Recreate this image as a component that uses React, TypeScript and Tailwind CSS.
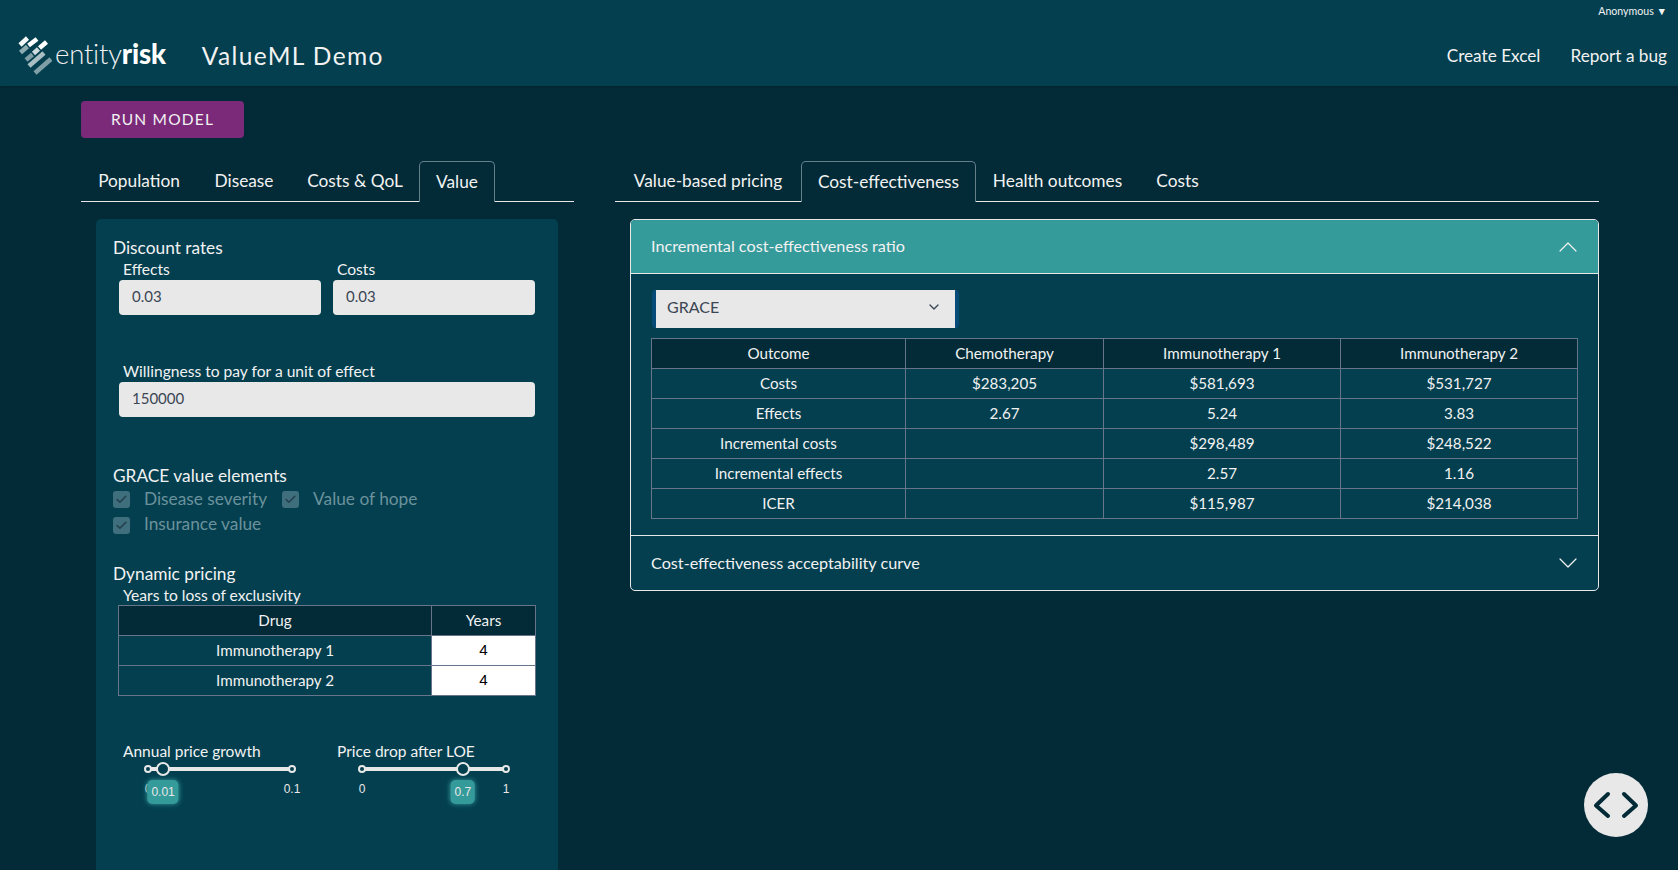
import React from 'react';
import { ChevronDown, ChevronUp, Check } from 'lucide-react';

const Logo = () => (
  <svg width="34" height="40" viewBox="0 0 34 40" fill="none" strokeWidth="4.6" className="shrink-0">
    <path d="M2 9L9.5 2" stroke="#f4f7f7" />
    <path d="M2.5 16.5L9.5 10.5" stroke="#8fabb2" />
    <path d="M10.5 9.5L19 3" stroke="#ffffff" />
    <path d="M8 24L14.5 18.5" stroke="#7f9ea6" />
    <path d="M15.5 17.5L20.5 13" stroke="#cfdcdf" />
    <path d="M21.5 12L28.5 6" stroke="#ffffff" />
    <path d="M11 30L26 17" stroke="#a9bfc4" />
    <path d="M17 37L33 23" stroke="#7f9ea6" />
  </svg>
);

type Tab = { label: string; width: string };

const TabBar = ({ tabs, active }: { tabs: Tab[]; active: string }) => (
  <div className="flex h-[41px] items-stretch">
    {tabs.map((t) => (
      <div
        key={t.label}
        className={
          (t.label === active
            ? 'flex items-center justify-center rounded-t-[5px] border border-b-0 border-[#66808c] '
            : 'flex items-center justify-center border-b border-[#e8e8e8] ') + t.width
        }
      >
        {t.label}
      </div>
    ))}
    <div className="flex-1 border-b border-[#e8e8e8]" />
  </div>
);

const TextInput = ({ value }: { value: string }) => (
  <div className="flex h-[35px] items-center rounded-[4px] bg-[#e8e8e8] pb-[2px] pl-[13px] text-[15px] text-[#3b4654]">{value}</div>
);

const CheckItem = ({ label }: { label: string }) => (
  <div className="flex items-center">
    <span className="flex h-[17px] w-[17px] items-center justify-center rounded-[3px] bg-[#3f6f7c]">
      <Check size={13} strokeWidth={3} className="text-[#243f4c]" />
    </span>
    <span className="ml-[14px] -translate-y-px text-[#6b929c]">{label}</span>
  </div>
);

const Slider = ({ pos, value, marks }: { pos: number; value: string; marks: [number, string][] }) => (
  <div className="relative ml-[25px] h-[44px] w-[144px]">
    <div className="absolute left-0 right-0 top-[3px] h-[4px] bg-[#e8e8e8]" />
    {[0, 100].map((p) => (
      <span
        key={p}
        className="absolute top-[1px] h-[8px] w-[8px] -translate-x-1/2 rounded-full border-2 border-[#e8e8e8] bg-[#033f4f]"
        style={{ left: p + '%' }}
      />
    ))}
    {marks.map(([p, l]) => (
      <span key={l} className="absolute top-[16px] -translate-x-1/2 font-['Liberation_Sans',sans-serif] text-[12px] text-[#e8e8e8]" style={{ left: p + '%' }}>
        {l}
      </span>
    ))}
    <span
      className="absolute top-[-2px] h-[14px] w-[14px] -translate-x-1/2 rounded-full border-2 border-[#e8e8e8] bg-[#033f4f]"
      style={{ left: pos + '%' }}
    />
    <span
      className="absolute top-[16px] flex h-[24px] -translate-x-1/2 items-center rounded-[5px] bg-[#359a9a] px-[4px] font-['Liberation_Sans',sans-serif] text-[12px] text-[#e8e8e8] shadow-[0_0_5px_#359a9a]"
      style={{ left: pos + '%' }}
    >
      {value}
    </span>
  </div>
);

const leftTabs: Tab[] = [
  { label: 'Population', width: 'w-[116px]' },
  { label: 'Disease', width: 'w-[94px]' },
  { label: 'Costs & QoL', width: 'w-[128px]' },
  { label: 'Value', width: 'w-[76px]' },
];

const rightTabs: Tab[] = [
  { label: 'Value-based pricing', width: 'w-[186px]' },
  { label: 'Cost-effectiveness', width: 'w-[175px]' },
  { label: 'Health outcomes', width: 'w-[163px]' },
  { label: 'Costs', width: 'w-[77px]' },
];

const rows = [
  ['Costs', '$283,205', '$581,693', '$531,727'],
  ['Effects', '2.67', '5.24', '3.83'],
  ['Incremental costs', '', '$298,489', '$248,522'],
  ['Incremental effects', '', '2.57', '1.16'],
  ['ICER', '', '$115,987', '$214,038'],
];

const cell = 'h-[30px] border border-[#66758a] p-0 text-center font-normal';

export default function App() {
  return (
    <div className="relative h-[870px] overflow-hidden bg-[#022b37] font-['Lato',sans-serif] text-[17.3px] text-[#f2f2f2]">
      <header className="h-[86px] bg-[#033f4f] shadow-[0_1px_2px_rgba(0,0,0,0.2)]">
        <div className="flex h-[24px] items-center justify-end pr-[11px] text-[10.6px]">Anonymous ▼</div>
        <div className="flex h-[64px] items-center pl-[18px] pr-[11px]">
          <Logo />
          <div className="mb-[5px] ml-[3px] text-[27.5px] leading-none font-light tracking-[-0.2px]">
            entity<span className="font-black text-white">risk</span>
          </div>
          <div className="ml-[36px] text-[24.5px] tracking-[1.4px]">ValueML Demo</div>
          <div className="ml-auto text-[17.2px]">Create Excel</div>
          <div className="ml-[30px] text-[17.2px]">Report a bug</div>
        </div>
      </header>

      <main className="flex pl-[81px]">
        <div className="w-[493px]">
          <button className="mt-[15px] h-[37px] w-[163px] rounded-[4px] bg-[#7a2a79] text-[15.5px] tracking-[1.2px] text-[#f2f2f2]">RUN MODEL</button>
          <div className="mt-[23px]">
            <TabBar tabs={leftTabs} active="Value" />
          </div>
          <section className="ml-[15px] mt-[17px] h-[700px] w-[462px] rounded-[5px] bg-[#033f4f] px-[17px] pt-[16px]">
            <div className="h-[24px] leading-[25px]">Discount rates</div>
            <div className="ml-[6px] grid w-[416px] grid-cols-2 gap-[12px] text-[15.6px]">
              <div>
                <div className="h-[21px] pl-[4px] leading-[20px]">Effects</div>
                <TextInput value="0.03" />
              </div>
              <div>
                <div className="h-[21px] pl-[4px] leading-[20px]">Costs</div>
                <TextInput value="0.03" />
              </div>
            </div>
            <div className="ml-[6px] mt-[45px] w-[416px] text-[15.6px]">
              <div className="h-[22px] pl-[4px] leading-[22px]">Willingness to pay for a unit of effect</div>
              <TextInput value="150000" />
            </div>

            <div className="mt-[46px] h-[24px] leading-[25px]">GRACE value elements</div>
            <div className="flex h-[25px] items-center gap-[15px]">
              <CheckItem label="Disease severity" />
              <CheckItem label="Value of hope" />
            </div>
            <div className="flex h-[26px] items-center">
              <CheckItem label="Insurance value" />
            </div>

            <div className="mt-[23px] h-[24px] leading-[25px]">Dynamic pricing</div>
            <div className="h-[20px] pl-[10px] text-[15.6px] leading-[20px]">Years to loss of exclusivity</div>
            <table className="ml-[5px] w-[418px] border-collapse text-[15.2px]">
              <thead>
                <tr className="bg-[#022b37]">
                  <th className={cell + ' w-[313px]'}>Drug</th>
                  <th className={cell}>Years</th>
                </tr>
              </thead>
              <tbody>
                {['Immunotherapy 1', 'Immunotherapy 2'].map((d) => (
                  <tr key={d}>
                    <td className={cell}>{d}</td>
                    <td className={cell + " bg-white font-['Liberation_Sans',sans-serif] text-black"}>4</td>
                  </tr>
                ))}
              </tbody>
            </table>

            <div className="ml-[10px] mt-[44px] grid grid-cols-[214px_1fr] text-[15.5px]">
              <div>
                <div className="h-[24px] leading-[23px]">Annual price growth</div>
                <Slider pos={10.5} value="0.01" marks={[[0, '0'], [100, '0.1']]} />
              </div>
              <div>
                <div className="h-[24px] leading-[23px]">Price drop after LOE</div>
                <Slider pos={70} value="0.7" marks={[[0, '0'], [100, '1']]} />
              </div>
            </div>
          </section>
        </div>

        <div className="ml-[41px] w-[984px] pt-[75px]">
          <TabBar tabs={rightTabs} active="Cost-effectiveness" />
          <section className="ml-[15px] mt-[17px] w-[969px] rounded-[5px] border border-[#e8e8e8] bg-[#033f4f] text-[16.2px]">
            <div className="flex h-[54px] items-center justify-between rounded-t-[4px] border-b border-[#e8e8e8] bg-[#359a9a] pl-[20px] pr-[14px]">
              <span>Incremental cost-effectiveness ratio</span>
              <ChevronUp size={32} strokeWidth={0.9} />
            </div>
            <div className="border-b border-[#e8e8e8] pb-[16px] pl-[20px] pt-[16px]">
              <div className="ml-px flex h-[38px] w-[307px] items-center justify-between rounded-[4px] border-x-4 border-[#064a78] bg-[#e8e8e8] pb-[4px] pl-[11px] pr-[13px] text-[16px] text-[#3b4654]">
                GRACE
                <ChevronDown size={16} strokeWidth={2} />
              </div>
              <table className="mt-[10px] w-[926px] table-fixed border-collapse text-[15.2px]">
                <thead>
                  <tr className="bg-[#022b37]">
                    <th className={cell + ' w-[254px]'}>Outcome</th>
                    <th className={cell + ' w-[198px]'}>Chemotherapy</th>
                    <th className={cell + ' w-[237px]'}>Immunotherapy 1</th>
                    <th className={cell + ' w-[237px]'}>Immunotherapy 2</th>
                  </tr>
                </thead>
                <tbody>
                  {rows.map((r) => (
                    <tr key={r[0]}>
                      {r.map((c, i) => (
                        <td key={i} className={cell}>{c}</td>
                      ))}
                    </tr>
                  ))}
                </tbody>
              </table>
            </div>
            <div className="flex h-[54px] items-center justify-between pl-[20px] pr-[14px]">
              <span>Cost-effectiveness acceptability curve</span>
              <ChevronDown size={32} strokeWidth={0.9} />
            </div>
          </section>
        </div>
      </main>

      <button className="absolute left-[1584px] top-[773px] flex h-[64px] w-[64px] items-center justify-center rounded-full bg-[#e8e8e8]">
        <svg width="64" height="64" viewBox="0 0 64 64" fill="none" stroke="#022b37" strokeWidth="4" strokeLinecap="round" strokeLinejoin="round">
          <path d="M24 21L12 32.5L24 43" />
          <path d="M40 21L52 32.5L40 43" />
        </svg>
      </button>
    </div>
  );
}
